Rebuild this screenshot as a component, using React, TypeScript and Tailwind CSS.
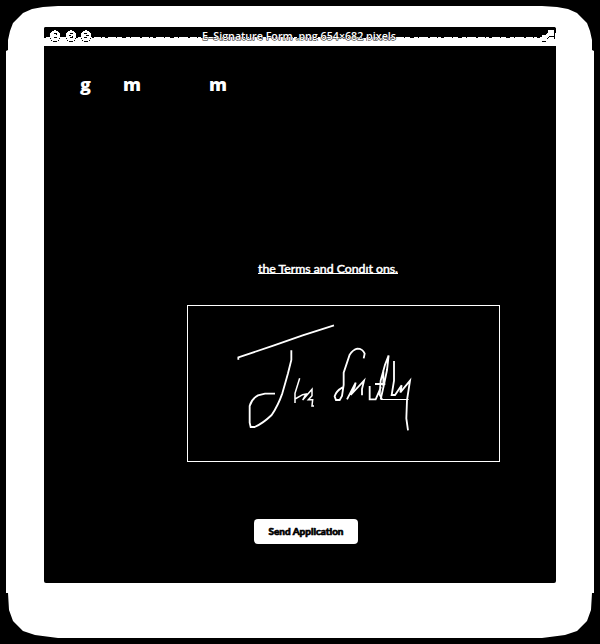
import React from 'react';

function TrafficLight({ mark }: { mark: string }) {
  return (
    <svg width="12" height="14" viewBox="0 0 12 14" shapeRendering="crispEdges">
      <circle cx="6" cy="6.5" r="5.2" fill="#fff" />
      <path d={mark} stroke="#000" strokeWidth="1" fill="none" />
      <path d="M1 9.5h1M2 11.5h1M4 12.5h4M9 11.5h1M10 9.5h1" stroke="#000" strokeWidth="1" />
    </svg>
  );
}

function TitleBar() {
  return (
    <header className="relative flex h-[19px] bg-[linear-gradient(#000_10px,#fff_10px)] font-['Open_Sans','Noto_Sans',sans-serif]">
      <svg className="absolute left-0 top-[10px]" width="512" height="1" shapeRendering="crispEdges">
        <path d="M0 .5H512" stroke="#000" strokeDasharray="2 7 1 3 3 8 1 5 4 4 1 9" />
      </svg>
      <div className="relative ml-[5px] flex gap-[3.5px] pt-[2px]">
        <TrafficLight mark="M5 4.5h3M7 5.5h1M5 8.5h3" />
        <TrafficLight mark="M5 4.5h3M4 6.5h2M7 7.5h1M5 8.5h3" />
        <TrafficLight mark="M4 4.5h3M6 6.5h3M4 8.5h3" />
      </div>
      <svg className="absolute left-[158px] top-0 overflow-visible" width="196" height="19">
        <text
          x="0"
          y="13"
          textLength="194"
          lengthAdjust="spacingAndGlyphs"
          className="fill-white stroke-black text-[11px] font-semibold [paint-order:stroke]"
          strokeWidth="1"
        >
          E–Signature Form .png 654×682 pixels
        </text>
        <path d="M0 16.5H196" stroke="#fff" strokeWidth="5" />
      </svg>
      <svg className="absolute right-0 top-0" width="18" height="19" shapeRendering="crispEdges">
        <path d="M10 3h6v6h-2l-5 3H4V8h3l3-3z" fill="#fff" />
        <path d="M9 11.5h1M10 10.5h1M11 9.5h5M4 14.5h4M16.5 3v9" stroke="#000" fill="none" />
        <path d="M17 0h1v1h-1zM17 6h1v13h-1z" fill="#fff" />
      </svg>
    </header>
  );
}

function Signature() {
  return (
    <svg
      width="200"
      height="130"
      viewBox="0 0 600 390"
      className="ml-[42px] mt-1"
      fill="none"
      stroke="#fff"
      strokeWidth="5.5"
    >
      <path d="M25 149V142L130 107L218 76L312 46" />
      <path d="M184 121V150L174 190L166 218L157 250Q144 287 125 315Q99 340 74 351H62L59 338V288Q65 266 84 256L105 251H135" />
      <path d="M209 205L195 250V279V267L218 254L228 252L218 270L246 238V257L235 269H248L246 288H252" strokeWidth="4.5" />
      <path d="M401 145L404 131Q398 116 382 116Q369 119 359 134L341 188V225L336 258L329 270H318L314 259Q318 243 338 232" />
      <path d="M351 268L377 218L374 231L362 255L402 212L396 237V256" />
      <path d="M419 228V268H437L453 231M435 222H466M476 136L465 164L452 212L449 254L456 268M476 136L471 180L462 224L452 268M460 180V228" />
      <path d="M492 153V212L485 255H495L515 226L511 247L540 212L536 238L531 270L529 325L534 361" />
      <path d="M452 268.5H536" strokeWidth="3" />
    </svg>
  );
}

export default function App() {
  return (
    <div className="h-[644px] w-[600px] overflow-hidden bg-black text-white">
      <div className="h-full w-full bg-white px-[44px] pt-[27px] [clip-path:polygon(6px_51px,8px_50px,8px_40px,10px_31px,13px_23px,23px_13px,32px_9px,43px_7px,58px_6px,542px_6px,557px_7px,568px_9px,577px_13px,587px_23px,590px_31px,592px_40px,592px_50px,594px_51px,594px_593px,592px_593px,591px_610px,587px_621px,577px_631px,565px_635px,542px_638px,58px_638px,35px_635px,23px_631px,13px_621px,9px_610px,8px_593px,6px_593px)]">
        <main className="flex h-[556px] w-[512px] flex-col overflow-hidden rounded-[2px] bg-black">
          <TitleBar />
          <h1 className="ml-[36px] mt-[26px] flex h-6 font-['Open_Sans','Noto_Sans',sans-serif] text-[18px] font-extrabold leading-6">
            <span className="w-[43px]">g</span>
            <span className="w-[86px]">m</span>
            <span>m</span>
          </h1>
          <p className="ml-[214px] mt-[164px] h-[16px]">
            <svg width="142" height="18" className="block overflow-visible">
              <text
                x="0"
                y="12.5"
                textLength="140"
                lengthAdjust="spacingAndGlyphs"
                className="fill-white stroke-white font-['Lato',sans-serif] text-[12px]"
                strokeWidth="0.5"
              >
                the Terms and Condıt ons.
              </text>
              <path d="M0 13.5H140" stroke="#fff" />
            </svg>
          </p>
          <section className="ml-[143px] mt-[29px] h-[157px] w-[313px] shrink-0 border border-white">
            <Signature />
          </section>
          <button className="ml-[210px] mt-[57px] flex h-[25px] w-[104px] shrink-0 items-center justify-center rounded-[4px] bg-white">
            <svg width="76" height="14">
              <text
                x="0.5"
                y="10"
                textLength="75"
                lengthAdjust="spacingAndGlyphs"
                className="fill-black stroke-black font-['Lato',sans-serif] text-[9.5px] font-bold"
                strokeWidth="0.7"
              >
                Send Application
              </text>
            </svg>
          </button>
        </main>
      </div>
    </div>
  );
}
